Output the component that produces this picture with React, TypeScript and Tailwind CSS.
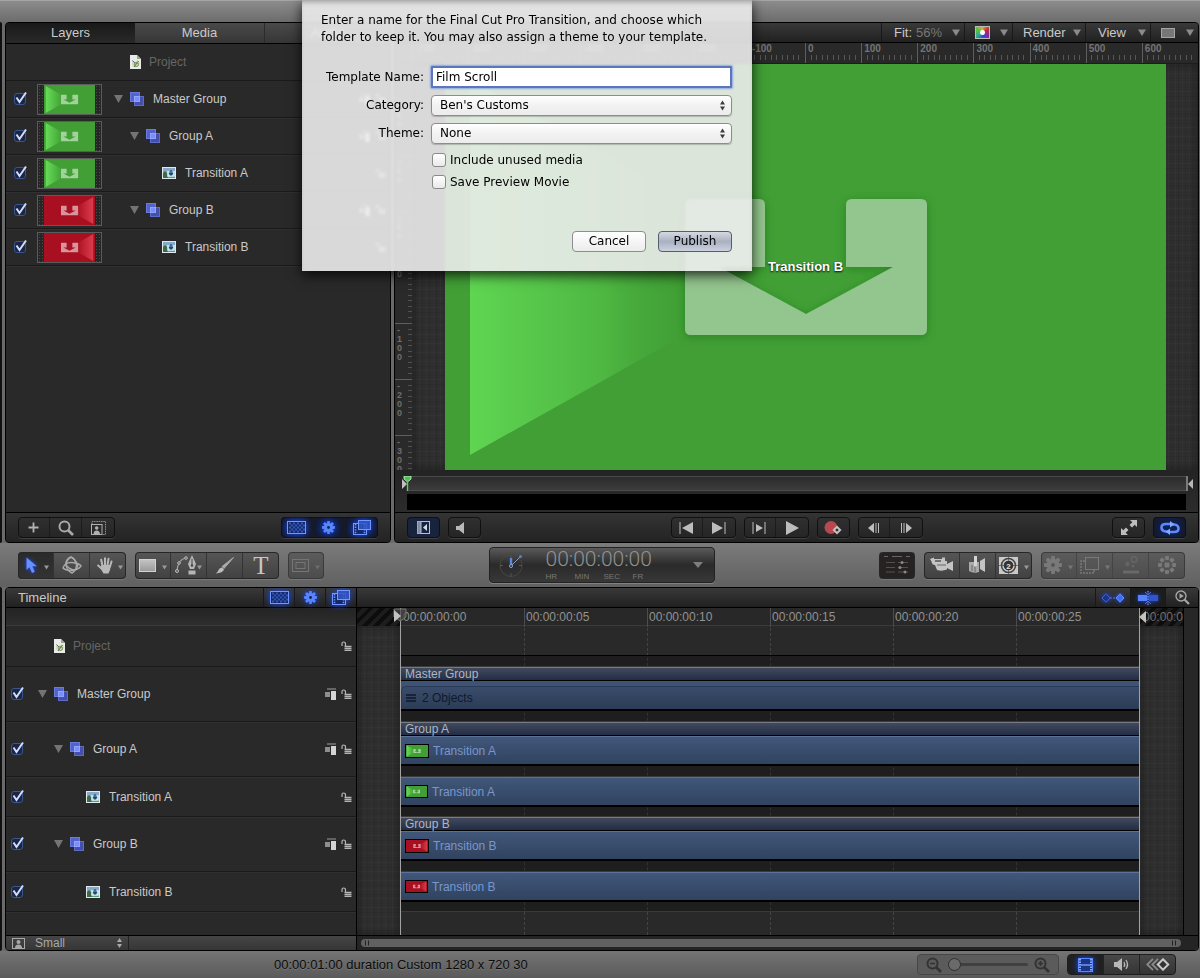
import React from "react";

/* ---------- shared styles ---------- */

const CLOTH =
  "bg-[#2e2e2e] bg-[repeating-linear-gradient(90deg,rgba(255,255,255,0.02)_0_1px,transparent_1px_3px,rgba(0,0,0,0.06)_3px_4px,transparent_4px_7px),repeating-linear-gradient(0deg,rgba(255,255,255,0.02)_0_1px,transparent_1px_4px,rgba(0,0,0,0.05)_4px_5px,transparent_5px_9px)] shadow-[inset_0_0_8px_rgba(0,0,0,0.45)]";
const BAR = "bg-linear-to-b from-[#393939] to-[#212121]";
const LOGO =
  "M246 135H314q6 0 6 6V203H274L361 250L448 203H401V141q0-6 6-6H476q6 0 6 6V265q0 6-6 6H246q-6 0-6-6V141q0-6 6-6Z";

/* ---------- icons ---------- */

type IconProps = { children: React.ReactNode; w: number; h: number; className?: string };

function Icon({ children, w, h, className = "" }: IconProps) {
  return (
    <svg width={w} height={h} viewBox={`0 0 ${w} ${h}`} className={`shrink-0 ${className}`} aria-hidden="true">
      {children}
    </svg>
  );
}

const Caret = ({ className = "text-[#8a8a8a]" }: { className?: string }) => (
  <Icon w={8} h={7} className={className}>
    <path d="M0 0.5H8L4 7Z" fill="currentColor" />
  </Icon>
);

const TinyCaret = ({ className = "text-[#9a9a9a]" }: { className?: string }) => (
  <Icon w={5} h={5} className={`translate-y-0.5 ${className}`}>
    <path d="M0 0.5H5L2.5 4.5Z" fill="currentColor" />
  </Icon>
);

const Disclosure = () => (
  <Icon w={9} h={8}>
    <path d="M0 0H9L4.5 8Z" fill="#747474" />
  </Icon>
);

const DocIcon = () => (
  <Icon w={11} h={14}>
    <path d="M0 0H7L11 4V14H0Z" fill="#e9ebe6" />
    <path d="M7 0V4H11Z" fill="#9da39c" />
    <path d="M2 6L5 7L8 5L10 8L8 11L4 12L2 10Z" fill="#d3d9a0" />
    <path d="M2.5 5.5L5 8M8.5 6L4 12" stroke="#4c6a8a" strokeWidth="1" />
    <circle cx="6.5" cy="9.5" r="2" fill="none" stroke="#7a8f4a" />
  </Icon>
);

const GroupIcon = () => (
  <Icon w={14} h={14}>
    <rect x="4.5" y="4.5" width="9" height="9" fill="#4450ac" stroke="#5d6cc8" />
    <rect x="0.5" y="0.5" width="9" height="9" fill="#5463c8" stroke="#6a7be0" />
    <rect x="4.5" y="4.5" width="5" height="5" fill="#7a8eff" stroke="#93a4ff" />
  </Icon>
);

const ClipIcon = () => (
  <Icon w={14} h={12}>
    <rect width="14" height="12" fill="#dfe9ee" />
    <rect x="1" y="1" width="12" height="10" fill="#86aacb" />
    <path d="M1 11V6L3 4L6 7V11Z" fill="#3c6b46" />
    <path d="M5 11L13 8V11Z" fill="#5e9b78" />
    <path d="M6 4V9H12V4" stroke="#d5ecf5" strokeWidth="1.6" fill="none" />
    <path d="M9 3V7M7.2 6L9 8L10.8 6" stroke="#1c4a66" strokeWidth="1.2" fill="none" />
  </Icon>
);

const LockIcon = () => (
  <Icon w={11} h={10}>
    <path d="M1 5V2.5Q1 1 2.500 1Q4.500 1 4.500 3V5" stroke="#b4b4b4" strokeWidth="1.2" fill="none" />
    <path d="M3.5 5.500H10.5M3.5 7.500H10.5M3.5 9.500H10.5" stroke="#b4b4b4" strokeWidth="1.4" />
  </Icon>
);

const StackIcon = () => (
  <Icon w={12} h={12}>
    <path d="M2 1H11" stroke="#7a7a7a" strokeWidth="1.4" />
    <rect x="0" y="4" width="5" height="5" fill="#8e8e8e" />
    <rect x="6" y="3" width="5" height="9" fill="#d4d4d4" />
  </Icon>
);

const CheckerIcon = () => (
  <Icon w={19} h={13} className="drop-shadow-[0_0_3px_#1d4dff]">
    <rect x="0.5" y="0.5" width="18" height="12" fill="#14286a" stroke="#6f97ff" />
    <path
      d="M2 2.5H18M4 4.5H18M2 6.5H18M4 8.5H18M2 10.5H18"
      stroke="#3156b8"
      strokeWidth="2"
      strokeDasharray="2 2"
    />
  </Icon>
);

function Cog({ size = 13, className = "text-[#5585ff] drop-shadow-[0_0_3px_#1d4dff]", hole = "#16224a" }) {
  return (
    <svg width={size} height={size} viewBox="0 0 16 16" className={`shrink-0 ${className}`} aria-hidden="true">
      {[0, 45, 90, 135].map((a) => (
        <rect key={a} x="6.3" y="0" width="3.4" height="16" rx="1" fill="currentColor" transform={`rotate(${a} 8 8)`} />
      ))}
      <circle cx="8" cy="8" r="5.6" fill="currentColor" />
      <circle cx="8" cy="8" r="1.7" fill={hole} />
    </svg>
  );
}

const FilmStackIcon = () => (
  <Icon w={18} h={15} className="drop-shadow-[0_0_3px_#1d4dff]">
    <rect x="0.5" y="3.5" width="13" height="11" fill="#14286a" stroke="#6f97ff" />
    <path d="M2.500 4V14M11.500 4V14" stroke="#6f97ff" strokeWidth="1.6" strokeDasharray="1.4 1.2" />
    <rect x="5.500" y="0.5" width="12" height="9" fill="#3156c4" fillOpacity="0.85" stroke="#7098ff" />
  </Icon>
);

const Magnifier = ({ sign, className = "text-[#a5a5a5]" }: { sign?: string; className?: string }) => (
  <svg viewBox="0 0 16 16" className={`size-4 shrink-0 ${className}`} aria-hidden="true">
    <circle cx="6.5" cy="6.5" r="5" fill="none" stroke="currentColor" strokeWidth="2" />
    <path d="M10 10L15 15" stroke="currentColor" strokeWidth="2.6" />
    {sign === "play" && <path d="M5 4L9 6.5L5 9Z" fill="currentColor" />}
    {(sign === "minus" || sign === "plus") && <path d="M4 6.5H9" stroke="currentColor" strokeWidth="1.6" />}
    {sign === "plus" && <path d="M6.5 4V9" stroke="currentColor" strokeWidth="1.6" />}
  </svg>
);

const PersonFrame = () => (
  <Icon w={13} h={11}>
    <rect x="0.5" y="0.5" width="12" height="10" fill="none" stroke="#a8a8a8" />
    <circle cx="6.5" cy="4" r="2" fill="#a8a8a8" />
    <path d="M3 10Q3 6.5 6.5 6.5Q10 6.5 10 10Z" fill="#a8a8a8" />
  </Icon>
);

/* ---------- building blocks ---------- */

type Tone = "dark" | "tool" | "dim";

const GROUP_TONES: Record<Tone, string> = {
  dark: "h-[21px] outline-[#101010] bg-linear-to-b from-[#303030] to-[#252525] divide-[#1b1b1b]",
  tool: "h-[27px] outline-[#262626] bg-linear-to-b from-[#565656] to-[#414141] divide-[#333]",
  dim: "h-[27px] outline-[#3a3a3a] bg-linear-to-b from-[#5c5c5c] to-[#4c4c4c] divide-[#444]",
};

function Group({ tone, children }: { tone: Tone; children: React.ReactNode }) {
  return (
    <div
      className={`flex shrink-0 divide-x overflow-hidden rounded-[4px] outline-1 -outline-offset-1 shadow-[0_1px_0_rgba(255,255,255,0.12)] ${GROUP_TONES[tone]}`}
    >
      {children}
    </div>
  );
}

type BtnProps = { label: string; className?: string; children: React.ReactNode };

function Btn({ label, className = "", children }: BtnProps) {
  return (
    <button type="button" aria-label={label} className={`flex items-center justify-center ${className}`}>
      {children}
    </button>
  );
}

const BLUE_ON = "bg-[radial-gradient(circle,#0d2260_0%,#131a2e_80%)]";

function Check({ label }: { label: string }) {
  return (
    <label className="relative flex size-3 shrink-0">
      <input
        type="checkbox"
        defaultChecked
        aria-label={label}
        className="peer m-0 size-3 appearance-none rounded-[3px] border border-[#39568f] bg-[#1b2644]"
      />
      <svg
        viewBox="0 0 14 14"
        aria-hidden="true"
        className="pointer-events-none absolute -top-[2px] left-0 size-3.5 opacity-0 peer-checked:opacity-100"
      >
        <path d="M2.5 6.5L5.5 11L12 1.5" fill="none" stroke="#cfdcff" strokeWidth="2" />
      </svg>
    </label>
  );
}

type Hue = "green" | "red";

function ThumbArt({ hue, className }: { hue: Hue; className: string }) {
  const green = hue === "green";
  return (
    <svg viewBox="0 0 721 406" preserveAspectRatio="none" className={className} aria-hidden="true">
      <defs>
        <linearGradient id="thumbGreen">
          <stop offset="0" stopColor="#66dc58" />
          <stop offset="0.7" stopColor="#419f35" />
        </linearGradient>
        <linearGradient id="thumbRed">
          <stop offset="0.3" stopColor="#a80f20" />
          <stop offset="1" stopColor="#dc3c4c" />
        </linearGradient>
      </defs>
      <rect width="721" height="406" fill={green ? "#419f35" : "#a80f20"} />
      {green ? (
        <path d="M25 15L361 203L25 391Z" fill="url(#thumbGreen)" />
      ) : (
        <path d="M696 15L361 203L696 391Z" fill="url(#thumbRed)" />
      )}
      <path d={LOGO} fill={green ? "#a0d29a" : "#d8949b"} />
    </svg>
  );
}

/* ---------- layers panel ---------- */

type Node = { name: string; depth: number; kind: "group" | "clip"; hue: Hue };

const NODES: Node[] = [
  { name: "Master Group", depth: 0, kind: "group", hue: "green" },
  { name: "Group A", depth: 1, kind: "group", hue: "green" },
  { name: "Transition A", depth: 2, kind: "clip", hue: "green" },
  { name: "Group B", depth: 1, kind: "group", hue: "red" },
  { name: "Transition B", depth: 2, kind: "clip", hue: "red" },
];

const INDENT = ["pl-0", "pl-4", "pl-8"];

function NodeLabel({ node }: { node: Node }) {
  return (
    <div className={`flex flex-1 items-center ${INDENT[node.depth]}`}>
      <span className="flex w-4 items-center">{node.kind === "group" && <Disclosure />}</span>
      {node.kind === "group" ? <GroupIcon /> : <ClipIcon />}
      <span className="pl-[9px] whitespace-nowrap">{node.name}</span>
    </div>
  );
}

function LayersPanel() {
  return (
    <section className="flex w-[386px] shrink-0 flex-col overflow-hidden rounded-[4px] border border-black bg-[#292929]">
      <div className="flex h-[21px] shrink-0 border-b border-black text-[13px] text-[#cacaca]" role="tablist">
        <button type="button" role="tab" aria-selected="true" className="w-[129px] bg-linear-to-b from-[#191919] to-[#292929]">
          Layers
        </button>
        <button type="button" role="tab" aria-selected="false" className="w-[129px] bg-linear-to-b from-[#4a4a4a] to-[#363636]">
          Media
        </button>
        <button type="button" role="tab" aria-selected="false" className="flex-1 border-l border-[#2c2c2c] bg-linear-to-b from-[#4a4a4a] to-[#363636]">
          Audio
        </button>
      </div>
      <div className="text-[12px] text-[#cacaca]">
        <div className="flex h-[37px] items-center gap-2 border-b border-[#1a1a1a] pl-[124px] text-[#666]">
          <DocIcon />
          Project
        </div>
        {NODES.map((n) => (
          <div key={n.name} className="flex h-[37px] items-center border-b border-[#1a1a1a] pl-2 shadow-[0_1px_0_#303030]">
            <Check label={`Show ${n.name}`} />
            <div className="mr-3 ml-[11px] flex h-[31px] w-[65px] justify-center border border-[#5b5b5b] bg-[#262626] bg-[radial-gradient(#4a4a4a_1px,transparent_1px)] bg-size-[3px_3px]">
              <ThumbArt hue={n.hue} className="h-full w-[51px]" />
            </div>
            <NodeLabel node={n} />
            <span className="flex gap-1 pr-1">
              {n.kind === "group" && <StackIcon />}
              <LockIcon />
            </span>
          </div>
        ))}
      </div>
      <div className="flex-1" />
      <div className="flex h-[30px] shrink-0 items-center justify-between border-t border-black bg-linear-to-b from-[#343434] to-[#232323] px-3">
        <Group tone="dark">
          <Btn label="Add object" className="w-8">
            <Icon w={11} h={11}><path d="M5.5 0.5V10.5M0.5 5.5H10.5" stroke="#b3b3b3" strokeWidth="1.8" /></Icon>
          </Btn>
          <Btn label="Search" className="w-8"><Magnifier className="text-[#a8a8a8]" /></Btn>
          <Btn label="Preview size" className="w-[33px]">
            <Icon w={15} h={14}>
              <path d="M1 3V0.5H14.5V13.5H12" fill="none" stroke="#909090" strokeDasharray="1.5 0.8" />
              <rect x="0.5" y="3.5" width="10.5" height="10" fill="none" stroke="#b0b0b0" />
              <circle cx="5.7" cy="7" r="1.8" fill="#b0b0b0" />
              <path d="M2.5 13Q2.7 9.5 5.7 9.5Q8.7 9.5 9 13Z" fill="#b0b0b0" />
            </Icon>
          </Btn>
        </Group>
        <Group tone="dark">
          <Btn label="Show masks" className={`w-8 ${BLUE_ON}`}><CheckerIcon /></Btn>
          <Btn label="Show behaviors" className={`w-8 ${BLUE_ON}`}><Cog /></Btn>
          <Btn label="Show filters" className={`w-[33px] ${BLUE_ON}`}><FilmStackIcon /></Btn>
        </Group>
      </div>
    </section>
  );
}

/* ---------- viewer panel ---------- */

const RULER_X = [-700, -600, -500, -400, -300, -200, -100, 0, 100, 200, 300, 400, 500, 600];
const RULER_Y = ["", "300", "200", "100", "0", "-100", "-200", "-300"];
const MINORS = [0, 1, 2, 3, 4, 5, 6, 7, 8, 9];

function HorizontalRuler() {
  return (
    <div className="grid h-[21px] grid-cols-14 overflow-hidden border-b border-[#1c1c1c] bg-[#292929] pl-[17px]">
      {RULER_X.map((v) => (
        <div key={v} className="flex min-w-0 flex-col border-l border-[#5e5e5e]">
          <span className="h-3 pl-0.5 text-[10px] leading-3 font-bold text-[#747474]">{v}</span>
          <span className="flex h-[5px] items-stretch">
            {MINORS.map((m) => (
              <i key={m} className="flex-1 border-r border-[#565656] last:border-transparent" />
            ))}
          </span>
        </div>
      ))}
    </div>
  );
}

function VerticalRuler() {
  return (
    <div className="relative w-[17px] shrink-0 bg-[#2a2a2a]">
      <div className="absolute inset-0 flex flex-col justify-center overflow-hidden">
        {RULER_Y.map((v) => (
          <div key={v} className="flex h-14 shrink-0 border-t border-[#5e5e5e] pl-0.5">
            <span className="flex flex-1 flex-col pt-0.5 text-[9px] leading-[9px] font-bold text-[#6e6e6e]">
              {v.split("").map((c, i) => (
                <span key={i}>{c}</span>
              ))}
            </span>
            <span className="flex w-1 flex-col">
              {MINORS.map((m) => (
                <i key={m} className="flex-1 border-b border-[#505050] last:border-transparent" />
              ))}
            </span>
          </div>
        ))}
      </div>
    </div>
  );
}

function Stage() {
  return (
    <div className={`flex-1 pr-8 pl-[33px] ${CLOTH}`}>
      <div className="relative">
        <svg viewBox="0 0 721 406" className="block w-full" role="img" aria-label="Transition preview">
          <defs>
            <linearGradient id="fold" x1="25" x2="245" y1="0" y2="0" gradientUnits="userSpaceOnUse">
              <stop offset="0" stopColor="#5fd552" />
              <stop offset="1" stopColor="#43a438" />
            </linearGradient>
            <linearGradient id="foldEnd" x1="160" x2="250" y1="0" y2="0" gradientUnits="userSpaceOnUse">
              <stop offset="0" stopColor="#419f35" stopOpacity="0" />
              <stop offset="1" stopColor="#419f35" />
            </linearGradient>
            <filter id="soft" x="-20%" y="-20%" width="140%" height="140%">
              <feDropShadow dx="0" dy="2" stdDeviation="5" floodColor="#1d5a15" floodOpacity="0.4" />
            </filter>
          </defs>
          <rect width="721" height="406" fill="#419f35" />
          <path d="M25 15L361 203L25 391Z" fill="url(#fold)" />
          <path d="M155 80H370V330H155Z" fill="url(#foldEnd)" />
          <path d={LOGO} fill="#93c58e" filter="url(#soft)" />
        </svg>
        <span className="absolute inset-0 flex items-center justify-center text-[13px] font-bold text-white [text-shadow:0_1px_2px_#000]">
          Transition B
        </span>
      </div>
    </div>
  );
}

function ViewerPanel() {
  const item = "flex w-12 items-center justify-between border-l border-[#191919] pr-1 pl-2.5";
  return (
    <section className="flex min-w-0 flex-1 flex-col overflow-hidden rounded-[4px] border border-black bg-[#2a2a2a]">
      <div className={`flex h-5 shrink-0 justify-end border-b border-black text-[13px] text-[#cacaca] ${BAR}`}>
        <button type="button" className="flex w-[83px] items-center gap-1 border-l border-[#191919] pr-1 pl-3">
          Fit: <span className="flex-1 text-left text-[#777]">56%</span>
          <Caret />
        </button>
        <button type="button" aria-label="Color channels" className={item}>
          <span className="h-[13px] w-[15px] border border-[#bbb] bg-[radial-gradient(circle,#fff_2px,transparent_3px),conic-gradient(#d8b03a,#c42a3a,#7a2aa8,#2b50d8,#2fae8a,#59c23a,#d8b03a)]" />
          <Caret />
        </button>
        <button type="button" className="flex w-[73px] items-center justify-between border-l border-[#191919] pr-1 pl-2.5">
          Render
          <Caret />
        </button>
        <button type="button" className="flex w-[65px] items-center justify-between border-l border-[#191919] pr-1 pl-3">
          View
          <Caret />
        </button>
        <button type="button" aria-label="View layout" className={item}>
          <span className="h-2.5 w-3.5 border border-[#a5a5a5] bg-[#777]" />
          <Caret />
        </button>
      </div>
      <HorizontalRuler />
      <div className="flex">
        <VerticalRuler />
        <Stage />
      </div>
      <div className="relative flex flex-col gap-[3px] bg-linear-to-b from-[#232323] to-[#2c2c2c] px-3 pt-1.5 pb-0.5">
        <div className="h-[15px] border-y border-[#4b4b4b] bg-linear-to-b from-[#2c2c2c] to-[#3c3c3c]" />
        <div className="h-4 bg-black" />
        <svg viewBox="0 0 10 16" className="absolute top-1.5 left-[7px] h-4 w-2.5" aria-hidden="true">
          <path d="M0 3V13L5 8Z" fill="#c0c0c0" />
          <path d="M2 0H9L9 3L5.5 6L2 3Z" fill="#4fc053" stroke="#d6f3d4" strokeWidth="0.8" />
          <path d="M5.5 5V15" stroke="#5fd25b" strokeWidth="1.4" />
        </svg>
        <svg viewBox="0 0 8 16" className="absolute top-1.5 right-1 h-4 w-2" aria-hidden="true">
          <path d="M1 0V15" stroke="#d0d0d0" strokeWidth="1" />
          <path d="M7 3V13L2 8Z" fill="#b8b8b8" />
        </svg>
      </div>
      <div className="grid h-[30px] shrink-0 grid-cols-[1fr_auto_1fr] items-center border-t border-black bg-linear-to-b from-[#343434] to-[#232323] px-3">
        <div className="flex gap-2">
          <Group tone="dark">
            <Btn label="Toggle project pane" className="w-[33px] bg-[#18233e]">
              <Icon w={13} h={13}>
                <rect x="0.5" y="0.5" width="12" height="12" fill="none" stroke="#b8c0d4" />
                <rect x="0" y="0" width="4" height="13" fill="#7e8aa8" stroke="#b8c0d4" />
                <path d="M10 3V10L6 6.5Z" fill="#d2d9ea" />
              </Icon>
            </Btn>
          </Group>
          <Group tone="dark">
            <Btn label="Mute" className="w-[33px] pr-2">
              <Icon w={9} h={12}><path d="M0 4H3L8 0V12L3 8H0Z" fill="#b8b8b8" /></Icon>
            </Btn>
          </Group>
        </div>
        <div className="flex gap-2">
          <Group tone="dark">
            <Btn label="Go to start" className="w-8">
              <Icon w={14} h={12}><path d="M1 0V12" stroke="#bdbdbd" /><path d="M14 0V12L3 6Z" fill="#bdbdbd" /></Icon>
            </Btn>
            <Btn label="Go to end" className="w-[33px]">
              <Icon w={14} h={12}><path d="M13 0V12" stroke="#bdbdbd" /><path d="M0 0V12L11 6Z" fill="#bdbdbd" /></Icon>
            </Btn>
          </Group>
          <Group tone="dark">
            <Btn label="Play from start" className="w-8">
              <Icon w={14} h={12}>
                <path d="M1 0V12M13 0V12" stroke="#bdbdbd" /><path d="M4 2V10L11 6Z" fill="#bdbdbd" />
              </Icon>
            </Btn>
            <Btn label="Play" className="w-[33px]">
              <Icon w={13} h={14}><path d="M0 0V14L13 7Z" fill="#bdbdbd" /></Icon>
            </Btn>
          </Group>
          <Group tone="dark">
            <Btn label="Record" className="w-[33px]">
              <Icon w={18} h={14}>
                <circle cx="7" cy="6.5" r="6.5" fill="#b8484e" />
                <path d="M13 4.5L17.5 9L13 13.5L8.5 9Z" fill="#c4c4c4" />
                <path d="M13 7.2L14.8 9L13 10.8L11.2 9Z" fill="#333" />
              </Icon>
            </Btn>
          </Group>
          <Group tone="dark">
            <Btn label="Previous frame" className="w-8">
              <Icon w={11} h={10}><path d="M6 0V10L0 5Z" fill="#bdbdbd" /><path d="M8 0V10M10.5 0V10" stroke="#bdbdbd" /></Icon>
            </Btn>
            <Btn label="Next frame" className="w-[33px]">
              <Icon w={11} h={10}><path d="M5 0V10L11 5Z" fill="#bdbdbd" /><path d="M0.5 0V10M3 0V10" stroke="#bdbdbd" /></Icon>
            </Btn>
          </Group>
        </div>
        <div className="flex justify-end gap-2">
          <Group tone="dark">
            <Btn label="Full screen" className="w-[33px]">
              <Icon w={16} h={15}>
                <path d="M9 0H16V7L13.7 4.7L11 7.5L8.5 5L11.3 2.3Z" fill="#bdbdbd" />
                <path d="M7 15H0V8L2.3 10.3L5 7.5L7.5 10L4.7 12.7Z" fill="#bdbdbd" />
              </Icon>
            </Btn>
          </Group>
          <Group tone="dark">
            <Btn label="Loop playback" className={`w-[33px] ${BLUE_ON}`}>
              <Icon w={20} h={14}>
                <path d="M7.500 10.500H6Q1.500 10 1.500 6.500Q1.500 3 6 3H11" fill="none" stroke="#5d8bff" strokeWidth="2.6" />
                <path d="M12.500 3.500H14Q18.500 4 18.500 7.500Q18.500 11 14 11H9" fill="none" stroke="#5d8bff" strokeWidth="2.6" />
                <path d="M10 0V6.500L14.500 3.200Z" fill="#86a9ff" />
                <path d="M10 14V7.500L5.500 10.800Z" fill="#86a9ff" />
              </Icon>
            </Btn>
          </Group>
        </div>
      </div>
    </section>
  );
}

/* ---------- tool bar ---------- */

function ToolBar() {
  return (
    <div className="grid h-11 shrink-0 grid-cols-[1fr_auto_1fr] items-center pr-[15px] pl-[18px]">
      <div className="flex gap-[9px]">
        <Group tone="tool">
          <Btn label="Select" className="w-9 gap-1.5 bg-linear-to-b from-[#2a2a2a] to-[#333] pl-1">
            <Icon w={12} h={17} className="drop-shadow-[0_0_2px_#1d4dff]">
              <path d="M0.5 0.5V13L3.5 10.3L6 16L8.8 14.8L6.3 9.3H11Z" fill="#6690ff" />
            </Icon>
            <TinyCaret />
          </Btn>
          <Btn label="3D transform" className="w-9">
            <Icon w={20} h={18}>
              <g fill="none" stroke="#a9a9a9" strokeWidth="1.4">
                <path d="M9 1Q14 3 14.500 9Q14 15 10 17Q5 15 4 9Q4.500 3 9 1Z" />
                <path d="M1 12Q3 6 10 6.500Q17 7 19 10Q16 14 10 14.500Q4 15 1 12Z" />
                <path d="M9 1Q3 4 4 9Q8 14 13 14Q18 10 14 6Q12 3 9 1" />
              </g>
            </Icon>
          </Btn>
          <Btn label="Pan" className="w-9 gap-1 pl-1">
            <Icon w={17} h={17}>
              <g stroke="#b9b9b9" strokeWidth="2" strokeLinecap="round" fill="none">
                <path d="M5.5 9L4.2 2.8M8 8V1.2M10.5 8L11.5 1.8M13 9.5L14.5 4.5M4.5 11.5L1.2 8.5" />
              </g>
              <path d="M4.5 8H14L13 13L11.5 16.5H6.5L3.5 11.5Z" fill="#b9b9b9" />
            </Icon>
            <TinyCaret />
          </Btn>
        </Group>
        <Group tone="tool">
          <Btn label="Rectangle" className="w-9 gap-1.5">
            <span className="h-[13px] w-[17px] border border-[#d2d2d2] bg-linear-to-b from-[#c2c2c2] to-[#9c9c9c]" />
            <TinyCaret />
          </Btn>
          <Btn label="Bezier" className="w-9">
            <Icon w={22} h={20}>
              <path d="M2 16Q3 4 11 3" fill="none" stroke="#a2a2a2" strokeWidth="1.2" />
              <circle cx="2" cy="16" r="1.5" fill="#555" stroke="#bbb" />
              <circle cx="4" cy="8" r="1.3" fill="#555" stroke="#bbb" />
              <circle cx="11" cy="3" r="1.3" fill="#555" stroke="#bbb" />
              <path d="M17 0L13 9L15 14H19L21 9Z" fill="#b5b5b5" />
              <path d="M17 4V10" stroke="#444" />
              <circle cx="17" cy="10.5" r="1.2" fill="#444" />
              <rect x="13.5" y="15.5" width="7" height="4" fill="#b5b5b5" />
            </Icon>
            <TinyCaret />
          </Btn>
          <Btn label="Paint stroke" className="w-9">
            <Icon w={19} h={17}>
              <path d="M18.5 0.5L9 11.5L7 9.5Z" fill="#aaa" stroke="#aaa" />
              <path d="M7 10.5L9 12.5Q8 16 0.5 16.5Q3 15 3.5 13Q4.5 10.5 7 10.5Z" fill="#bbb" />
            </Icon>
          </Btn>
          <Btn label="Text" className="w-9">
            <span className="[font-family:'Liberation_Serif',serif] text-[25px] leading-none text-[#c6c6c6]">T</span>
          </Btn>
        </Group>
        <Group tone="dim">
          <Btn label="Mask" className="w-9 gap-1.5">
            <Icon w={17} h={13}>
              <rect x="0.5" y="0.5" width="16" height="12" fill="none" stroke="#757575" />
              <rect x="4" y="3.5" width="9" height="6" fill="none" stroke="#757575" />
            </Icon>
            <TinyCaret className="text-[#6d6d6d]" />
          </Btn>
        </Group>
      </div>

      <div className="flex h-9 w-[226px] items-center rounded-[4px] border border-[#222] bg-linear-to-b from-[#5a5a5a] via-[#2a2a2a] via-50% to-[#383838] shadow-[0_1px_0_rgba(255,255,255,0.2)]">
        <Icon w={26} h={24} className="ml-2">
          <circle cx="13" cy="12.5" r="11" fill="none" stroke="#4c4542" />
          <path d="M13 2V5M13 20V23.5M2 12.5H5M21 12.5H24" stroke="#555" />
          <path d="M13 13L22 4" stroke="#8b97b5" />
          <path d="M13 5V13" stroke="#5c86e0" strokeWidth="2.4" />
          <circle cx="13" cy="13" r="1.5" fill="#222" stroke="#8ba6e8" />
          <circle cx="22.5" cy="3.5" r="1.5" fill="#5f7fc6" />
        </Icon>
        <div className="ml-[22px] flex w-[116px] flex-col">
          <span className="h-5 [font-family:Roboto,sans-serif] text-[21px] leading-5 font-light whitespace-nowrap text-[#929292]">
            00:00:00:00
          </span>
          <span className="mt-1 grid grid-cols-4 text-[8px] leading-2 text-[#787878]">
            <span>HR</span>
            <span>MIN</span>
            <span>SEC</span>
            <span>FR</span>
          </span>
        </div>
        <Btn label="Timecode options" className="flex-1 pl-5">
          <Icon w={10} h={6}><path d="M0 0H10L5 6Z" fill="#7d7d7d" /></Icon>
        </Btn>
      </div>

      <div className="flex justify-end gap-[9px]">
        <Group tone="tool">
          <Btn label="HUD" className="w-9 border border-[#6a6a6a] bg-[#262222]">
            <Icon w={28} h={20}>
              <path d="M1 1.5H5M9 1.5H19M23 1.5H27" stroke="#666" />
              <path d="M3 7.5H12M15 7.5H25M3 12.5H12M15 12.5H25M3 17H12M15 17H25" stroke="#505050" />
              <circle cx="19" cy="7.5" r="1.5" fill="#888" />
              <circle cx="17" cy="12.5" r="1.5" fill="#888" />
              <circle cx="22" cy="17" r="1.5" fill="#888" />
            </Icon>
          </Btn>
        </Group>
        <Group tone="tool">
          <Btn label="New camera" className="w-9">
            <Icon w={24} h={16}>
              <path d="M0 2L4 0.5V2H12V0.5H15V4H17V7L23 4V14L17 11V12.5Q12 14.500 7 13L5 8Q2 8 1.500 4.500Z" fill="#c4c4c4" />
              <path d="M7 8H16" stroke="#666" />
              <path d="M5 4H11" stroke="#555" strokeWidth="1.4" />
            </Icon>
          </Btn>
          <Btn label="New light" className="w-9">
            <Icon w={17} h={18}>
              <path d="M0 6H10V16Q5 18 0 15Z" fill="#aaa" />
              <path d="M11 5L16 2V16L11 13Z" fill="#c4c4c4" />
              <rect x="5" y="0" width="3" height="10" fill="#d4d4d4" />
              <path d="M3 9V15M6 11V16" stroke="#666" />
            </Icon>
          </Btn>
          <Btn label="New generator" className="w-9 gap-1.5">
            <Icon w={19} h={17}>
              <rect width="19" height="17" fill="#c9c9c9" />
              <path d="M0 8.5H19M9.5 0V17" stroke="#777" />
              <circle cx="9.5" cy="8.5" r="7" fill="none" stroke="#444" strokeWidth="1.5" />
              <circle cx="9.5" cy="8.5" r="4.8" fill="#333" />
              <text x="9.5" y="11.5" fontSize="8" fontWeight="bold" textAnchor="middle" fill="#e5e5e5">2</text>
            </Icon>
            <TinyCaret />
          </Btn>
        </Group>
        <Group tone="dim">
          <Btn label="Add behavior" className="w-9 gap-1.5">
            <Cog size={18} className="text-[#797979]" hole="#555" />
            <TinyCaret className="text-[#777]" />
          </Btn>
          <Btn label="Add filter" className="w-9 gap-1.5">
            <Icon w={19} h={17}>
              <rect x="5.5" y="0.5" width="13" height="12" fill="none" stroke="#797979" />
              <path d="M5 4H1V16H14V13" fill="none" stroke="#797979" strokeDasharray="2 1" strokeWidth="1.5" />
            </Icon>
            <TinyCaret className="text-[#777]" />
          </Btn>
          <Btn label="Make particles" className="w-9">
            <Icon w={16} h={18}>
              <circle cx="11" cy="3.5" r="2.8" fill="none" stroke="#656565" strokeWidth="1.5" />
              <circle cx="4.5" cy="8" r="2.2" fill="#656565" />
              <circle cx="10" cy="10" r="1.5" fill="#656565" />
              <path d="M1 16H15" stroke="#696969" strokeWidth="3" strokeLinecap="round" />
            </Icon>
          </Btn>
          <Btn label="Replicate" className="w-9">
            <svg viewBox="0 0 18 18" className="size-[18px]" aria-hidden="true">
              {[0, 45, 90, 135, 180, 225, 270, 315].map((a) => (
                <rect key={a} x="7" y="0" width="4" height="4" rx="1" fill="#797979" transform={`rotate(${a} 9 9)`} />
              ))}
              <rect x="6.5" y="6.5" width="5" height="5" rx="1" fill="#797979" />
            </svg>
          </Btn>
        </Group>
      </div>
    </div>
  );
}

/* ---------- timeline ---------- */

const TIMES = ["00:00:00:00", "00:00:00:05", "00:00:00:10", "00:00:00:15", "00:00:00:20", "00:00:00:25"];

function Clip({ node, tall }: { node: Node; tall: boolean }) {
  return (
    <div className="flex h-[30px] items-center gap-1 border-t border-b-2 border-t-[#5b7196] border-b-black bg-linear-to-b from-[#41577a] to-[#30435f] pl-1 text-[12px] text-[#7a96cc]">
      <ThumbArt hue={node.hue} className={`border border-black ${tall ? "h-3.5 w-6" : "h-[13px] w-[23px]"}`} />
      {tall ? node.name.replace("Group", "Transition") : node.name}
    </div>
  );
}

function Track({ node }: { node: Node }) {
  const gap = <div className="flex-1 border-b border-[#3a3a3a] bg-black/25" />;
  if (node.kind === "clip") {
    return (
      <div className="flex h-10 flex-col">
        <Clip node={node} tall={false} />
        {gap}
      </div>
    );
  }
  return (
    <div className="flex h-[55px] flex-col">
      <div className="h-3.5 border-t border-b border-t-[#757b86] border-b-black bg-linear-to-b from-[#414a5c] to-[#222d47] pl-1 text-[12px] leading-[13px] text-[#b0b5c0]">
        {node.name}
      </div>
      {node.depth === 0 ? (
        <div className="flex h-[30px] flex-col border-b-2 border-black bg-[#3f5475] pt-[5px]">
          <div className="flex flex-1 items-center gap-1.5 rounded-tl-[5px] border-t border-l border-[#283a58] bg-linear-to-b from-[#394c6b] to-[#2c3c56] pl-1 text-[12px] text-[#10192b]">
            <Icon w={10} h={8}><path d="M0 1H10M0 4H10M0 7H10" stroke="#10192b" strokeWidth="1.5" /></Icon>
            2 Objects
          </div>
        </div>
      ) : (
        <Clip node={node} tall />
      )}
      {gap}
    </div>
  );
}

function TimelineHead() {
  return (
    <div className="flex w-[351px] shrink-0 flex-col border-r border-black bg-[#292929]">
      <div className={`flex h-5 shrink-0 items-center border-b border-black pl-3 text-[13px] text-[#cacaca] ${BAR}`}>
        <h2 className="flex-1">Timeline</h2>
        <Btn label="Show masks" className="h-full w-[31px] border-l border-[#191919]"><CheckerIcon /></Btn>
        <Btn label="Show behaviors" className="h-full w-[31px] border-l border-[#191919]"><Cog /></Btn>
        <Btn label="Show filters" className="h-full w-[31px] border-l border-[#191919]"><FilmStackIcon /></Btn>
      </div>
      <div className="h-[18px] shrink-0 border-b border-[#3b3b3b] bg-linear-to-b from-[#242424] to-[#2e2e2e]" />
      <div className="flex flex-1 flex-col text-[12px] text-[#cacaca]">
        <div className="flex h-[41px] items-center gap-2 border-b border-[#1a1a1a] pr-1 pl-12 text-[#666]">
          <DocIcon />
          <span className="flex-1">Project</span>
          <LockIcon />
        </div>
        {NODES.map((n) => (
          <div
            key={n.name}
            className={`flex items-center border-b border-[#1a1a1a] pr-1 pl-[5px] shadow-[0_1px_0_#303030] ${n.kind === "group" ? "h-[55px]" : "h-10"}`}
          >
            <span className="mr-[15px] flex"><Check label={`Enable ${n.name}`} /></span>
            <NodeLabel node={n} />
            <span className="flex items-center gap-1">
              {n.kind === "group" && <StackIcon />}
              <LockIcon />
            </span>
          </div>
        ))}
      </div>
      <div className="flex h-[15px] shrink-0 items-center border-t border-black bg-linear-to-b from-[#454545] to-[#363636] text-[#a8a8a8]">
        <div className="flex h-full w-[123px] items-center gap-2.5 border-r border-[#222] pr-1.5 pl-1.5">
          <PersonFrame />
          <div className="relative flex h-full flex-1 items-center">
            <select aria-label="Row height" className="w-full appearance-none bg-transparent text-[12px] leading-[14px] outline-none" defaultValue="Small">
              <option>Small</option>
              <option>Medium</option>
              <option>Large</option>
            </select>
            <svg viewBox="0 0 5 10" className="pointer-events-none absolute right-0 h-2.5 w-[5px]" aria-hidden="true">
              <path d="M0 4L2.5 0L5 4ZM0 6L2.5 10L5 6Z" fill="#a8a8a8" />
            </svg>
          </div>
        </div>
      </div>
    </div>
  );
}

function TimelineTracks() {
  return (
    <div className="flex min-w-0 flex-1 flex-col">
      <div className={`flex h-5 shrink-0 justify-end border-b border-black ${BAR}`}>
        <Btn label="Show keyframes" className="w-[35px] border-l border-[#191919]">
          <Icon w={24} h={10} className="drop-shadow-[0_0_2px_#1d4dff]">
            <path d="M5 0.8L9 5L5 9.2L1 5Z" fill="#1d3684" stroke="#3a62dc" />
            <path d="M9 5H15" stroke="#4a74f0" strokeDasharray="2 1" />
            <path d="M19 0.8L23 5L19 9.2L15 5Z" fill="#3f6df0" stroke="#6a92ff" />
          </Icon>
        </Btn>
        <Btn label="Snapping" className="w-[35px] border-l border-[#191919] bg-[#1c1c1c]">
          <Icon w={20} h={14} className="drop-shadow-[0_0_2px_#1d4dff]">
            <rect x="0" y="4" width="9" height="6" fill="#5583ff" />
            <rect x="11" y="4" width="9" height="6" fill="#2f55c8" />
            <path d="M10 0V14" stroke="#8bb0ff" strokeDasharray="1.5 1" />
            <path d="M7 1L9 3M13 1L11 3M7 13L9 11M13 13L11 11" stroke="#5b6fc0" />
          </Icon>
        </Btn>
        <Btn label="Zoom to fit" className="w-[33px] border-l border-[#191919]">
          <Icon w={15} h={15} className="text-[#a5a5a5]">
            <circle cx="6" cy="6" r="5" fill="none" stroke="currentColor" strokeWidth="1.4" />
            <path d="M9.5 9.5L14 14" stroke="currentColor" strokeWidth="2.2" />
            <path d="M4.500 3.200L8.800 6L4.500 8.800Z" fill="currentColor" />
          </Icon>
        </Btn>
      </div>
      <div className="relative flex flex-1">
        <div className="flex w-[43px] shrink-0 flex-col">
          <div className="h-[18px] bg-[repeating-linear-gradient(135deg,#0d0d0d_0_4px,#1d1d1d_4px_8px)]" />
          <div className={`flex-1 ${CLOTH}`} />
        </div>
        <div className="relative min-w-0 flex-1 border-r border-l border-[#a2a2a2] bg-[#292929]">
          <div className="absolute inset-0 grid grid-cols-6">
            {TIMES.map((t) => (
              <i key={t} className="border-l border-dashed border-[#444] first:border-transparent" />
            ))}
          </div>
          <div className="relative flex flex-col">
            <div className="grid h-[18px] grid-cols-6 border-b border-[#3b3b3b] bg-[#282828] text-[12px] leading-[19px] text-[#929292]">
              {TIMES.map((t) => (
                <span key={t} className="border-l border-[#4d4d4d] pl-px whitespace-nowrap first:border-transparent">{t}</span>
              ))}
            </div>
            <div className="flex h-[41px] flex-col pt-[29px]">
              <div className="flex-1 border-t border-b border-t-black border-b-[#3a3a3a] bg-black/25" />
            </div>
            {NODES.map((n) => (
              <Track key={n.name} node={n} />
            ))}
          </div>
        </div>
        <div className="flex w-[43px] shrink-0 flex-col overflow-hidden">
          <div className="h-[18px] overflow-hidden bg-[repeating-linear-gradient(135deg,#0d0d0d_0_4px,#1d1d1d_4px_8px)] pl-[3px] text-[12px] leading-[19px] whitespace-nowrap text-[#6e6e6e]">
            00:00:0
          </div>
          <div className={`flex-1 ${CLOTH}`} />
        </div>
        <div className="w-[15px] shrink-0 border-l border-black bg-[#272727]" />
        <svg viewBox="0 0 14 14" className="absolute top-0 left-9 size-3.5" aria-hidden="true">
          <path d="M1 1H13V9L7.5 13L1 9Z" fill="#4b4b4b" fillOpacity="0.7" stroke="#757575" />
          <path d="M1 2V14L8 8Z" fill="#c2c2c2" />
        </svg>
        <svg viewBox="0 0 7 12" className="absolute top-[3px] right-[52px] h-3 w-[7px]" aria-hidden="true">
          <path d="M7 0V12L0 6Z" fill="#c2c2c2" />
        </svg>
      </div>
      <div className="flex h-[15px] shrink-0 items-center border-t border-black bg-[#242424] pr-[17px] pl-1">
        <div className="flex h-2 flex-1 justify-between rounded-full bg-[#616161] px-1 text-[#222]">
          <Icon w={5} h={8}><path d="M0.5 1.5V6.5M3.5 1.5V6.5" stroke="currentColor" /></Icon>
          <Icon w={5} h={8}><path d="M0.5 1.5V6.5M3.5 1.5V6.5" stroke="currentColor" /></Icon>
        </div>
      </div>
    </div>
  );
}

/* ---------- status bar ---------- */

function StatusBar() {
  return (
    <footer className="flex h-[27px] shrink-0 items-center pr-6 pl-[274px] text-[13px] text-[#0b0b0b]">
      <span className="flex-1 [text-shadow:0_1px_0_rgba(255,255,255,0.15)]">00:00:01:00 duration Custom 1280 x 720 30</span>
      <div className="mr-2 flex h-[21px] items-center gap-1.5 rounded-[4px] border border-[#474747] bg-[#5b5b5b] px-2">
        <Magnifier sign="minus" className="text-[#333]" />
        <input
          type="range"
          aria-label="Timeline zoom"
          defaultValue={0}
          className="h-3.5 w-20 appearance-none bg-transparent [&::-webkit-slider-runnable-track]:h-[3px] [&::-webkit-slider-runnable-track]:rounded-full [&::-webkit-slider-runnable-track]:bg-[#404040] [&::-webkit-slider-thumb]:-mt-[5px] [&::-webkit-slider-thumb]:size-[13px] [&::-webkit-slider-thumb]:appearance-none [&::-webkit-slider-thumb]:rounded-full [&::-webkit-slider-thumb]:border [&::-webkit-slider-thumb]:border-[#303030] [&::-webkit-slider-thumb]:bg-[#6a6a6a]"
        />
        <Magnifier sign="plus" className="text-[#333]" />
      </div>
      <div className="flex h-[21px] divide-x divide-[#222] overflow-hidden rounded-[4px] border border-[#1d1d1d] bg-linear-to-b from-[#484848] to-[#343434]">
        <Btn label="Show timeline" className="w-9 bg-[#202020]">
          <Icon w={15} h={14} className="drop-shadow-[0_0_3px_#1d4dff]">
            <rect x="0.5" y="0.5" width="14" height="13" fill="#1b3584" stroke="#5b88ff" />
            <path d="M2 1V13M13 1V13" stroke="#86a9ff" strokeWidth="2" strokeDasharray="1.5 1" />
            <path d="M3 7H12" stroke="#6f97ff" strokeWidth="1.5" />
          </Icon>
        </Btn>
        <Btn label="Show audio" className="w-9">
          <Icon w={16} h={13}>
            <path d="M0 4H3L8 0V13L3 9H0Z" fill="#b8b8b8" />
            <path d="M10 4Q11.5 6.5 10 9M12 2Q15 6.5 12 11" fill="none" stroke="#b8b8b8" strokeWidth="1.3" />
          </Icon>
        </Btn>
        <Btn label="Show keyframe editor" className="w-[35px]">
          <Icon w={24} h={13}>
            <path d="M7 0.8L1.3 6.5L7 12.2M12 0.8L6.3 6.5L12 12.2" fill="none" stroke="#8a8a8a" strokeWidth="1.8" />
            <path d="M17 1.3L22.2 6.5L17 11.7L11.8 6.5Z" fill="#333" stroke="#c8c8c8" strokeWidth="2" />
          </Icon>
        </Btn>
      </div>
    </footer>
  );
}

/* ---------- publish sheet ---------- */

function SheetSelect({ id, options }: { id: string; options: string[] }) {
  return (
    <div className="relative flex">
      <select
        id={id}
        className="h-[21px] w-full appearance-none rounded-[4px] border border-[#8d8d8d] bg-linear-to-b from-white via-[#f2f2f2] to-[#ececec] pr-6 pl-2 leading-[17px] shadow-[0_1px_1px_rgba(0,0,0,0.2)] outline-none"
      >
        {options.map((o) => (
          <option key={o}>{o}</option>
        ))}
      </select>
      <svg viewBox="0 0 5 10" className="pointer-events-none absolute top-[5px] right-[7px] h-[11px] w-[5px]" aria-hidden="true">
        <path d="M0 4L2.5 0L5 4ZM0 6L2.5 10L5 6Z" fill="#3c3c3c" />
      </svg>
    </div>
  );
}

function SheetCheck({ label }: { label: string }) {
  return (
    <label className="flex h-[22px] items-center gap-1">
      <input
        type="checkbox"
        className="m-0 size-3.5 appearance-none rounded-[3px] border border-[#8a8a8a] bg-linear-to-b from-white to-[#e9e9e9] checked:bg-[#5b7fd0]"
      />
      {label}
    </label>
  );
}

function PublishSheet() {
  return (
    <form
      aria-label="Publish template"
      onSubmit={(e) => e.preventDefault()}
      className="absolute top-0 left-[302px] w-[450px] bg-[#ececec]/90 pt-3 pr-5 pb-[19px] pl-[19px] [font-family:'DejaVu_Sans',sans-serif] text-[12px] leading-[17px] text-black shadow-[0_4px_12px_rgba(0,0,0,0.8),inset_0_5px_6px_-4px_rgba(0,0,0,0.4)] backdrop-blur-[1px]"
    >
      <p className="whitespace-nowrap">
        Enter a name for the Final Cut Pro Transition, and choose which
        <br />
        folder to keep it. You may also assign a theme to your template.
      </p>
      <div className="mt-5 grid grid-cols-[103px_1fr] items-center gap-x-[7px] gap-y-[7px]">
        <label htmlFor="template-name" className="text-right whitespace-nowrap">Template Name:</label>
        <input
          id="template-name"
          defaultValue="Film Scroll"
          className="h-[22px] rounded-[1px] border-2 border-[#5b76bd] bg-white px-[3px] shadow-[0_0_2px_1px_#8ba6e0] outline-none"
        />
        <label htmlFor="category" className="text-right">Category:</label>
        <SheetSelect id="category" options={["Ben's Customs"]} />
        <label htmlFor="theme" className="text-right">Theme:</label>
        <SheetSelect id="theme" options={["None"]} />
      </div>
      <div className="mt-[5px] pl-[111px]">
        <SheetCheck label="Include unused media" />
        <SheetCheck label="Save Preview Movie" />
      </div>
      <div className="mt-[38px] flex justify-end gap-3">
        <button type="button" className="h-[21px] w-[74px] rounded-[4px] border border-[#8d8d8d] bg-linear-to-b from-white to-[#ececec] leading-[17px]">
          Cancel
        </button>
        <button type="submit" className="h-[21px] w-[74px] rounded-[4px] border border-[#565d70] bg-linear-to-b from-[#d6d9e1] via-[#a9b1c2] to-[#ccd1dd] leading-[17px]">
          Publish
        </button>
      </div>
    </form>
  );
}

/* ---------- page ---------- */

export default function App() {
  return (
    <main className="relative flex min-h-screen w-full flex-col bg-[#6a6a6a] [font-family:'Liberation_Sans',Arial,sans-serif]">
      <div className="h-[22px] shrink-0 border-t border-[#a5a5a5] bg-linear-to-b from-[#8c8c8c] to-[#6c6c6c]" />
      <div className="flex gap-[3px] pr-px">
        <div className="w-[2px] rounded-r-[2px] bg-[#101010]" />
        <LayersPanel />
        <ViewerPanel />
      </div>
      <div className="bg-linear-to-b from-[#7b7b7b] to-[#606060]">
        <ToolBar />
      </div>
      <div className="flex flex-1 gap-[3px] pr-px">
        <div className="w-[2px] rounded-r-[2px] bg-[#101010]" />
        <section className="flex min-w-0 flex-1 overflow-hidden rounded-[4px] border border-black">
          <TimelineHead />
          <TimelineTracks />
        </section>
      </div>
      <div className="bg-linear-to-b from-[#757575] to-[#5a5a5a]">
        <StatusBar />
      </div>
      <PublishSheet />
    </main>
  );
}
